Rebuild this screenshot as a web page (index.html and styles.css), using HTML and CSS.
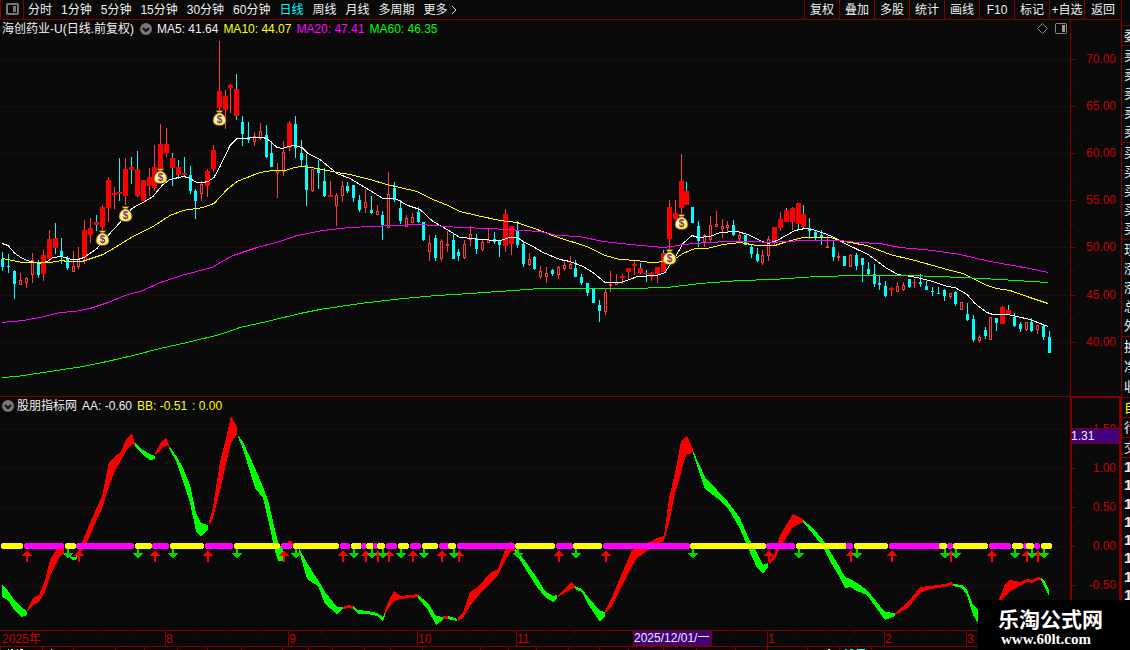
FILE: index.html
```html
<!DOCTYPE html>
<html lang="zh-CN">
<head>
<meta charset="utf-8">
<title>海创药业-U 日线</title>
<link rel="stylesheet" href="styles.css">
</head>
<body>
<div class="terminal">
  <main class="workspace">
    <header class="toolbar">
      <button class="panel-toggle" aria-label="侧栏">
        <svg width="13" height="12" viewBox="0 0 13 12"><rect x="1" y="1" width="11" height="10" rx="1" class="icon-frame"/><rect x="7" y="3" width="3" height="6" class="icon-fill"/></svg>
      </button>
      <nav class="periods">
        <button>分时</button><button>1分钟</button><button>5分钟</button><button>15分钟</button><button>30分钟</button><button>60分钟</button><button class="active">日线</button><button>周线</button><button>月线</button><button>多周期</button><button class="more">更多<svg width="7" height="10" viewBox="0 0 7 10"><path d="M1 1l4 4-4 4" class="chevron"/></svg></button>
      </nav>
      <nav class="tools">
        <button>复权</button><button>叠加</button><button>多股</button><button>统计</button><button>画线</button><button>F10</button><button>标记</button><button>+自选</button><button>返回</button>
      </nav>
    </header>

    <section class="panel">
      <div class="plot">
        <svg id="price" viewBox="0 0 1070 376" preserveAspectRatio="none"></svg>
        <div class="legend">
          <span>海创药业-U(日线.前复权)</span>
          <button class="fold" aria-label="折叠"><svg width="12" height="12" viewBox="0 0 12 12"><circle cx="6" cy="6" r="6" class="icon-fill"/><path d="M3 5l3 3 3-3" class="fold-mark"/></svg></button>
          <span>MA5: 41.64</span><span class="yellow">MA10: 44.07</span><span class="magenta">MA20: 47.41</span><span class="green">MA60: 46.35</span>
          <div class="corner">
            <svg width="11" height="11" viewBox="0 0 11 11"><path d="M5.500 .5l5 5-5 5-5-5z" class="diamond"/></svg>
            <svg width="12" height="11" viewBox="0 0 12 11"><rect x=".5" y=".5" width="11" height="10" rx="1" class="corner-frame"/><rect x="7" y="2" width="3" height="7" class="corner-fill"/></svg>
          </div>
        </div>
      </div>
      <svg id="price-axis" class="axis" viewBox="0 0 51 377" preserveAspectRatio="none"></svg>
    </section>

    <section class="panel">
      <div class="plot last">
        <svg id="wave" viewBox="0 0 1070 233" preserveAspectRatio="none"></svg>
        <div class="legend">
          <button class="fold first" aria-label="折叠"><svg width="12" height="12" viewBox="0 0 12 12"><circle cx="6" cy="6" r="6" class="icon-fill"/><path d="M3 5l3 3 3-3" class="fold-mark"/></svg></button>
          <span>股朋指标网</span><span>AA: -0.60</span><span class="yellow">BB: -0.51</span><span class="yellow">: 0.00</span>
        </div>
      </div>
      <svg id="wave-axis" class="axis" viewBox="0 0 51 233" preserveAspectRatio="none"></svg>
    </section>

    <footer class="dates"><svg id="dates" viewBox="0 0 1121 20" preserveAspectRatio="none"></svg></footer>
  </main>

  <aside class="quotes">
    <div class="group head"></div>
    <div class="group one"><span>委</span></div>
    <div class="group five"><span>卖</span><span>卖</span><span>卖</span><span>卖</span><span>卖</span></div>
    <div class="group five"><span>买</span><span>买</span><span>买</span><span>买</span><span>买</span></div>
    <div class="group five"><span>现</span><span>涨</span><span>涨</span><span>总</span><span>外</span></div>
    <div class="group three"><span>换</span><span>净</span><span>收</span></div>
    <div class="group one yellow"><span>自</span></div>
    <div class="group one"><span>行</span></div>
    <div class="group one"><span>交</span></div>
    <div class="group ticks"><span>1</span><span>1</span><span>1</span><span>1</span><span>1</span><span>1</span><span>1</span><span>1</span></div>
  </aside>
  <div class="watermark"><strong>乐淘公式网</strong><span>www.60lt.com</span></div>
</div>
<script src="chart.js"></script>
</body>
</html>
```
FILE: styles.css
```css
* { box-sizing: border-box; }
body {
  margin: 0;
  background: #0a0a0a;
  color: #f0f0f0;
  font: 12px/18px "Liberation Sans", "Noto Sans CJK SC", sans-serif;
  overflow: hidden;
}
button {
  margin: 0;
  padding: 0;
  border: 0;
  background: none;
  color: inherit;
  font: inherit;
  white-space: nowrap;
}
svg { display: block; }
.yellow { color: #ff0; }
.magenta { color: #f0f; }
.green { color: #0f0; }

.terminal {
  position: relative;
  display: grid;
  grid-template-columns: minmax(0, 1fr) 9px;
  height: 100vh;
}
.workspace {
  display: grid;
  grid-template-rows: 20px minmax(0, 377fr) minmax(0, 233fr) 20px;
  min-height: 0;
}

.toolbar { display: flex; border-bottom: 1px solid #800000; }
.panel-toggle {
  display: flex;
  align-items: center;
  justify-content: center;
  width: 24px;
  padding-bottom: 2px;
  border-right: 1px solid #800000;
  border-left: 1px solid #800000;
}
.periods { display: flex; gap: 9px; padding-left: 4px; }
.active { color: #0ff; }
.more { display: flex; align-items: center; gap: 3px; }
.tools { display: flex; margin-left: auto; }
.tools button { width: 35px; border-left: 1px solid #800000; }
.tools button:last-child { width: 37px; }
.icon-frame { fill: none; stroke: #777; stroke-width: 2; }
.icon-fill { fill: #777; }
.chevron { fill: none; stroke: #ddd; }

.panel {
  display: grid;
  grid-template-columns: minmax(0, 1fr) 51px;
  min-height: 0;
}
.plot { display: grid; grid-template: minmax(0, 1fr) / minmax(0, 1fr); border-bottom: 1px solid #800000; }
.plot.last { border-bottom: 0; }
.plot > * { grid-area: 1 / 1; width: 100%; min-height: 0; }
.plot > svg, .axis { width: 100%; height: 100%; min-height: 0; }
.legend { display: flex; align-items: center; align-self: start; gap: 5px; height: 17px; padding-left: 2px; white-space: nowrap; }
.legend .fold { margin-left: 1px; }
.legend .first { margin: 0 -2px 0 0; }
.fold-mark { fill: none; stroke: #111; stroke-width: 2; }
.corner { display: flex; gap: 7px; margin-left: auto; padding-right: 3px; }
.diamond, .corner-frame { fill: none; stroke: #888; }
.corner-fill { fill: #999; }
.dates svg { width: 100%; height: 20px; }

svg text { font: 12px "Liberation Sans", "Noto Sans CJK SC", sans-serif; fill: #c80000; }
svg .light { fill: #f0f0f0; }
.end { text-anchor: end; }
.grid { stroke: #780000; stroke-dasharray: 1 3; }
.rule { stroke: #800000; }
.rule.thick { stroke-width: 2; }
.edge { fill: none; stroke-width: 1; }
.tag { fill: #400080; stroke: #800000; }
.crisp { shape-rendering: crispEdges; }
svg .bag-dollar { font: bold 10px "Liberation Sans", sans-serif; fill: #803838; text-anchor: middle; }

.quotes { border-left: 1px solid #800000; overflow: hidden; font-size: 13px; }
.group { display: flex; flex-direction: column; justify-content: space-around; border-bottom: 1px solid #800000; padding-left: 2px; }
.group span { line-height: 18px; white-space: nowrap; }
.head { height: 26px; }
.one { height: 20px; }
.five { height: 97px; }
.three { height: 61px; }
.ticks { height: 146px; border: 0; font-size: 15px; font-weight: bold; }

.watermark {
  position: absolute;
  right: 0;
  bottom: 0;
  display: flex;
  flex-direction: column;
  align-items: flex-start;
  width: 152px;
  height: 50px;
  padding: 6px 0 0 20px;
  background: #000;
  color: #fff;
}
.watermark strong { font: bold 21px/24px "Noto Sans CJK SC", sans-serif; }
.watermark span { padding-left: 3px; font: bold 15px/18px "Liberation Serif", serif; }
```
FILE: chart.js
```javascript
const NS = 'http://www.w3.org/2000/svg';
const RED = '#ff0000', WICK = '#ff3c3c', CYAN = '#00ffff';

function add(parent, tag, attrs, text) {
  const el = document.createElementNS(NS, tag);
  for (const key in attrs) el.setAttribute(key, attrs[key]);
  if (text) el.textContent = text;
  parent.appendChild(el);
  return el;
}
function layer(id, top) {
  return add(document.getElementById(id), 'g', { transform: `translate(0 ${-top})` });
}
function rect(g, x, y, width, height, fill) {
  add(g, 'rect', { x, y, width, height, fill, class: 'crisp' });
}
function line(g, x1, y1, x2, y2, cls) {
  add(g, 'line', { x1, y1, x2, y2, class: 'crisp ' + cls });
}

// kind, high, low, body top, body bottom
// r: filled red, m: filled red with cyan wick, h: hollow red, c: cyan
const candles = `
c 252 271 259 267|c 254 273 266 267|c 270 299 271 284|h 273 285 280 285|h 277 288 278 283|h 253 283 260 275|c 260 278 263 275
r 250 281 255 274|r 230 262 239 259|m 223 254 238 248|c 238 264 251 257|c 256 270 259 268|h 251 272 266 272|h 247 269 259 267
r 220 264 230 258|r 218 243 228 235|m 215 231 222 225|r 205 230 207 227|r 177 222 180 208|r 187 209 193 195|m 158 201 192 194
r 158 205 169 196|m 157 184 167 170|m 151 197 169 196|r 180 201 180 201|r 168 196 177 186|r 145 191 167 188|r 124 170 144 170
r 128 157 144 153|m 153 186 158 168|m 160 179 167 175|m 157 177 173 175|c 166 194 175 191|c 189 219 191 201|h 181 201 184 194
r 169 197 171 186|r 145 172 150 169|r 41 110 91 108|r 90 129 96 110|r 84 113 85 88|m 74 120 89 116|c 116 146 122 134
c 122 143 137 140|h 132 146 136 142|h 123 140 131 139|c 125 158 135 157|c 141 167 153 167|h 163 198 170 173|h 141 176 152 172
r 121 151 123 148|c 116 158 124 148|c 140 166 153 160|c 154 206 165 190|h 169 192 169 191|c 160 189 168 173|c 168 197 181 196
r 181 197 195 197|h 193 226 195 206|h 181 202 186 196|c 182 193 186 191|c 185 202 185 198|c 195 212 200 210|h 189 213 202 208
c 196 214 210 213|h 205 215 211 215|c 211 240 215 225|h 172 228 194 228|c 182 202 188 200|c 200 224 208 221|h 215 227 218 227
h 213 223 217 223|c 207 223 212 222|c 222 241 222 240|h 235 261 243 252|c 235 261 238 258|h 239 261 241 259|h 231 252 244 246
c 234 259 240 259|c 249 261 252 256|h 240 259 244 258|h 226 246 234 240|c 234 254 238 249|h 240 251 242 250|h 229 243 240 243
c 232 244 239 242|c 240 257 241 245|r 209 252 214 246|r 226 255 226 244|c 221 248 230 245|c 241 267 244 264|h 253 266 259 265
c 256 270 257 269|h 266 279 271 277|h 267 283 273 277|c 269 276 270 274|h 266 279 267 275|h 260 271 265 269|h 256 269 264 269
c 260 277 268 277|c 274 285 277 283|c 283 296 283 293|c 289 303 289 303|c 300 322 305 311|h 289 315 292 312|h 271 292 284 286
h 274 285 282 285|r 274 284 276 278|r 268 280 268 272|r 261 275 264 266|m 263 274 268 273|m 270 282 273 274|r 272 281 273 277
r 267 283 267 274|m 250 272 253 272|r 200 250 207 239|r 200 220 213 219|r 154 215 181 208|m 182 205 191 205|c 207 223 207 223
c 221 247 226 241|h 234 247 235 242|h 216 242 225 240|h 211 227 224 227|h 219 238 226 229|h 221 232 225 228|c 220 236 225 235
h 231 242 235 239|c 235 245 235 245|c 245 258 247 254|c 248 262 254 261|h 250 265 255 263|h 236 261 239 256|r 227 246 227 242
r 212 230 219 228|m 208 222 210 222|r 207 230 208 222|m 203 230 203 224|m 205 229 214 227|c 218 239 228 231|c 230 240 232 237
c 230 245 235 237|h 236 248 246 248|c 240 261 247 257|h 252 261 256 258|c 256 266 256 266|h 254 267 255 267|c 253 270 255 266
c 258 282 258 265|c 262 275 269 274|c 264 287 274 284|c 276 290 283 285|c 281 297 286 296|r 287 296 288 290|h 282 292 286 292
h 282 291 285 290|c 279 288 279 287|r 279 288 282 283|c 274 287 282 284|c 281 290 286 290|c 287 296 291 292|c 287 294 293 294
c 289 301 290 296|h 293 299 293 297|c 291 306 292 304|h 302 310 302 310|c 303 321 314 320|c 315 342 319 340|h 335 343 337 341
c 327 339 330 336|h 317 340 317 340|c 318 331 318 323|r 306 324 307 324|m 305 314 310 314|c 313 327 317 326|c 322 332 324 329
h 322 331 322 330|c 318 332 322 331|h 325 334 325 330|c 325 340 326 337|c 331 353 337 353`.trim().split(/[|\n]/);

const averages = {
  '#ffffff': '2,243 8,245 15,253 21,257 27,260 39,263 47,261 53,257 61,256 72,259 78,259 84,257 97,248 108,235 120,222 132,208 137,205 143,202 153,196 163,184 170,179 183,176 188,177 197,182 203,182 208,181 214,177 220,166 230,145 237,138 262,137 267,138 277,147 283,148 288,146 295,145 302,147 308,153 320,159 337,173 350,178 360,184 370,190 383,198 395,198 408,205 420,209 433,221 447,229 460,237 473,238 478,239 500,240 510,237 517,237 525,242 533,246 543,252 560,259 570,261 583,266 593,272 605,282 620,282 630,279 637,276 657,275 665,272 670,264 675,257 683,243 692,235 698,237 710,236 720,232 737,231 748,234 760,240 768,243 777,240 795,230 805,228 812,229 822,232 832,236 845,243 868,254 887,268 898,274 917,277 933,281 947,286 955,287 967,294 975,303 987,312 993,314 1008,314 1017,316 1030,319 1048,326',
  '#ffff00': '2,258 23,262 50,262 62,260 67,261 82,261 103,254 110,250 133,236 153,226 170,215 183,210 203,207 214,203 227,189 237,181 260,172 272,170 285,170 295,167 302,166 318,168 337,172 350,174 370,179 387,184 417,191 433,199 448,205 460,211 477,215 500,220 517,222 540,230 558,237 587,246 605,255 620,259 637,260 650,262 668,261 677,257 683,253 695,248 707,248 723,244 740,242 757,245 775,245 787,241 803,237 830,237 840,240 850,242 867,245 890,254 915,260 947,269 963,273 973,278 987,285 997,288 1010,290 1030,297 1048,303',
  '#ff00ff': '2,322 23,320 40,317 60,312 75,311 90,308 108,302 125,295 143,290 160,282 185,274 212,267 222,261 233,255 257,247 280,241 297,235 323,230 350,227 393,225 420,224 460,227 490,228 523,230 540,231 557,235 580,236 603,241 630,244 663,247 672,246 683,244 707,242 730,241 753,241 770,242 787,241 803,240 840,240 857,242 880,243 900,247 933,250 960,254 990,261 1030,268 1048,272',
  '#00ff00': '2,377 17,376 50,371 83,366 107,361 133,355 160,348 187,342 220,334 240,327 267,321 300,313 320,309 360,303 403,298 437,295 470,293 513,290 540,288 630,288 667,287 700,283 740,280 773,279 817,276 860,275 910,275 963,277 1000,279 1048,282'
};

const price = layer('price', 20);
for (const y of [59, 106, 153, 200, 247, 295, 342]) line(price, 1, y + .5, 1067, y + .5, 'grid');
candles.forEach((row, i) => {
  const [kind, ...values] = row.split(' ');
  const [high, low, top, bottom] = values.map(Number);
  const x = Math.floor(2.95 + 5.846 * i);
  const wick = kind === 'c' || kind === 'm' ? CYAN : WICK;
  if (kind === 'h') {
    rect(price, x, high, 1, top - high, wick);
    rect(price, x, bottom, 1, low - bottom, wick);
    add(price, 'rect', { x: x - .5, y: top + .5, width: 2, height: Math.max(1, bottom - top - 1), fill: 'none', stroke: WICK, class: 'crisp' });
    return;
  }
  rect(price, x, high, 1, low - high, wick);
  if (kind === 'c') rect(price, x - 1, top, 3, bottom - top, CYAN);
  else rect(price, x - 2, top, 5, bottom - top, RED);
});
for (const color in averages) add(price, 'polyline', { points: averages[color], stroke: color, class: 'edge crisp', transform: 'translate(0 .5)' });

for (const [x, y] of [[219, 118], [102, 238], [125, 214], [160, 176], [669, 257], [681, 222]]) {
  const bag = add(price, 'g', { transform: `translate(${x + .5} ${y})` });
  add(bag, 'path', { d: 'M-3.500-7.500H3.500L1.500-5H-1.500Z', fill: '#ffdc20', stroke: '#684000', 'stroke-width': .8 });
  add(bag, 'path', { d: 'M-1.500-5H1.500C5-3 6.500-.5 6.500 2.500C6.500 6 4 7.500 0 7.500S-6.500 6-6.500 2.500C-6.500-.5-5-3-1.500-5Z', fill: '#ffe850', stroke: '#604018', 'stroke-width': .8 });
  add(bag, 'ellipse', { cx: -.5, cy: 1, rx: 4.5, ry: 4.5, fill: '#fff4cc' });
  add(bag, 'text', { x: 0, y: 5, class: 'bag-dollar' }, '$');
}

const priceAxis = layer('price-axis', 20);
line(priceAxis, .5, 20, .5, 397, 'rule');
line(priceAxis, 0, 396.5, 51, 396.5, 'rule');
[['70.00', 59], ['65.00', 106], ['60.00', 153], ['55.00', 200], ['50.00', 247], ['45.00', 295], ['40.00', 342]].forEach(([label, y], i) => {
  line(priceAxis, 0, y + .5, 6, y + .5, 'rule');
  if (i < 6) line(priceAxis, 0, y + 24.5, 3, y + 24.5, 'rule');
  add(priceAxis, 'text', { x: 46, y: y + 4, class: 'end' }, label);
});

// Each ribbon: colour, then x,top,bottom triples
const ribbons = `
g 2,584,596 8,591,599 15,601,610 21,607,616 27,611,614
r 27,610,611 33,598,604 39,595,601 45,580,591 50,560,575 57,548,561 60,546,555 64,548,553
g 69,555,556 72,557,559 75,557,559 77,556,557
r 77,555,557 83,540,548 89,525,537 97,507,518 102,496,508 109,462,485 115,456,470 120,453,461 126,440,450 132,433,443 135,444,445
g 135,443,445 143,450,454 150,454,459 155,456,458
r 155,453,455 161,442,448 166,438,445 169,445,446
g 169,446,447 177,457,462 183,468,480 190,485,502 196,513,530 201,523,536 208,525,528
r 209,522,525 213,507,517 220,462,490 226,438,463 231,416,442 237,427,433
g 238,435,436 243,442,448 255,468,487 263,487,497 268,500,518 275,530,550 278,542,560 283,549,560
r 288,541,545 292,541,546 295,545,546
g 299,548,550 307,563,578 318,580,585 325,592,603 337,607,613 343,607,608
r 343,607,608 348,605,607 353,606,608
g 353,606,608 358,610,613 367,611,613 377,613,615 383,617,621 385,612,614
r 385,611,614 388,602,608 394,591,600 401,596,598 418,594,596
g 418,595,597 428,603,609 436,616,624 443,617,619
r 443,616,618 448,616,618
g 448,616,618 457,619,620
r 458,618,620 463,612,617 470,592,605 478,587,595 490,573,582 498,569,574 505,550,560 511,541,550 515,546,550
g 515,548,551 522,557,562 528,565,572 537,578,586 545,591,596 553,596,601 557,595,597
r 558,595,596 571,582,588 575,586,587
g 575,586,588 582,589,591 588,597,603 600,611,621 605,612,615
r 605,611,613 612,597,605 622,573,585 632,550,565 637,546,557 650,542,548 657,538,543 664,536,540 669,498,522 675,473,493 681,441,472 684,438,460 687,436,453 693,449,452
g 693,451,452 705,477,488 717,490,497 728,502,507 740,518,528 748,537,547 757,553,567 763,565,573 768,563,566
r 769,561,563 775,553,558 780,535,547 793,514,526 803,519,521
g 803,520,521 813,528,533 823,540,546 830,551,560 840,568,577 845,577,587 850,579,586 857,583,590 867,590,594 885,612,619 895,613,615
r 895,613,614 908,602,607 920,587,592 930,586,588 945,584,586 951,582,584 953,584,585
g 953,584,585 962,585,587 967,590,594 973,605,614 978,610,622
r 997,604,610 1000,597,602 1005,584,595 1010,580,590 1020,582,585 1027,579,581 1032,580,582 1038,577,579 1041,578,579
g 1041,578,579 1045,582,587 1049,590,595`.trim().split('\n');

const wave = layer('wave', 397);
for (const y of [429, 468, 507, 546, 585]) line(wave, 1, y + .5, 1067, y + .5, 'grid');
for (const row of ribbons) {
  const [hue, ...steps] = row.split(' ');
  const points = steps.map(s => s.split(',').map(Number));
  const upper = points.map(p => p[0] + ',' + p[1]);
  const lower = points.map(p => p[0] + ',' + (p[2] + 1)).reverse();
  add(wave, 'polygon', { points: [...upper, ...lower].join(' '), fill: hue === 'g' ? '#00ff00' : '#f80000', class: 'crisp' });
}

const arrows = {
  up: [27, 79, 155, 208, 284, 343, 366, 378, 389, 413, 442, 459, 559, 606, 769, 851, 892, 951, 992, 1027, 1038],
  down: [68, 138, 173, 237, 296, 354, 372, 383, 401, 424, 454, 518, 576, 693, 799, 857, 945, 956, 1015, 1032, 1044]
};
for (const x of arrows.up) add(wave, 'path', { d: `M${x} 550l5 6h-4v6h-2v-6h-4z`, fill: '#ff0000', class: 'crisp' });
for (const x of arrows.down) add(wave, 'path', { d: `M${x - 1} 549h2v4h4l-5 6-5-6h4z`, fill: '#00d800', class: 'crisp' });

// Alternating yellow and magenta states along the zero line
const states = [[1, 23], [24, 64], [65, 76], [76, 134], [135, 152], [152, 169], [170, 204], [205, 233], [234, 280], [281, 292], [293, 339], [340, 350], [351, 362], [361, 367], [366, 374], [373, 378], [377, 385], [386, 397], [398, 409], [410, 421], [422, 438], [439, 450], [448, 456], [457, 515], [515, 555], [556, 573], [573, 602], [603, 690], [690, 766], [766, 795], [796, 847], [846, 853], [854, 888], [889, 941], [939, 947], [947, 953], [953, 988], [989, 1011], [1012, 1023], [1023, 1028], [1026, 1034], [1034, 1040], [1041, 1052]];
states.forEach(([from, to], i) => add(wave, 'rect', { x: from, y: 543, width: to - from, height: 6, rx: 3, fill: i % 2 ? '#ff00ff' : '#ffff00', class: 'crisp' }));

const waveAxis = layer('wave-axis', 397);
line(waveAxis, 1, 397, 1, 630, 'rule thick');
line(waveAxis, 50, 397, 50, 630, 'rule thick');
line(waveAxis, 0, 397.5, 51, 397.5, 'rule');
[['1.50', 429], ['1.00', 468], ['0.50', 507], ['0.00', 546], ['-0.50', 585]].forEach(([label, y]) => {
  line(waveAxis, 0, y + .5, 6, y + .5, 'rule');
  line(waveAxis, 0, y + 20.5, 3, y + 20.5, 'rule');
  add(waveAxis, 'text', { x: 46, y: y + 4, class: 'end' }, label);
});
add(waveAxis, 'rect', { x: 1.5, y: 428.5, width: 48, height: 15, class: 'tag crisp' });
add(waveAxis, 'text', { x: 1, y: 440, class: 'light' }, '1.31');

const dates = layer('dates', 630);
line(dates, 0, 630.5, 1121, 630.5, 'rule');
line(dates, 0, 646.5, 1121, 646.5, 'rule');
for (const x of [65, 98, 132, 196, 227, 257, 320, 353, 387, 413, 442, 467, 491, 545, 575, 604, 734, 796, 826, 855, 905, 925, 946]) line(dates, x + .5, 631, x + .5, 633, 'rule');
for (const x of [0, 42, 73, 115, 144, 177, 207, 241, 282, 308, 332, 364, 390, 422, 480, 508, 536, 568, 599, 628, 663, 696, 735, 767, 807, 839, 871]) line(dates, x + .5, 647, x + .5, 650, 'rule');
add(dates, 'text', { x: 2, y: 643 }, '2025年');
for (const [label, x] of [['8', 165], ['9', 288], ['10', 417], ['11', 516], ['1', 767], ['2', 884], ['3', 966]]) {
  line(dates, x + .5, 631, x + .5, 646, 'rule');
  add(dates, 'text', { x: x + 1, y: 643 }, label);
}
add(dates, 'rect', { x: 633.5, y: 630.5, width: 78, height: 15, class: 'tag crisp' });
add(dates, 'text', { x: 634, y: 642, class: 'light' }, '2025/12/01/一');
for (const [x, w] of [[8, 1], [11, 2], [17, 1], [20, 3], [51, 1], [828, 2]]) rect(dates, x, 649, w, 1, '#f0f0f0');
for (const [x, w] of [[845, 2], [850, 3], [857, 8]]) rect(dates, x, 649, w, 1, CYAN);
```
